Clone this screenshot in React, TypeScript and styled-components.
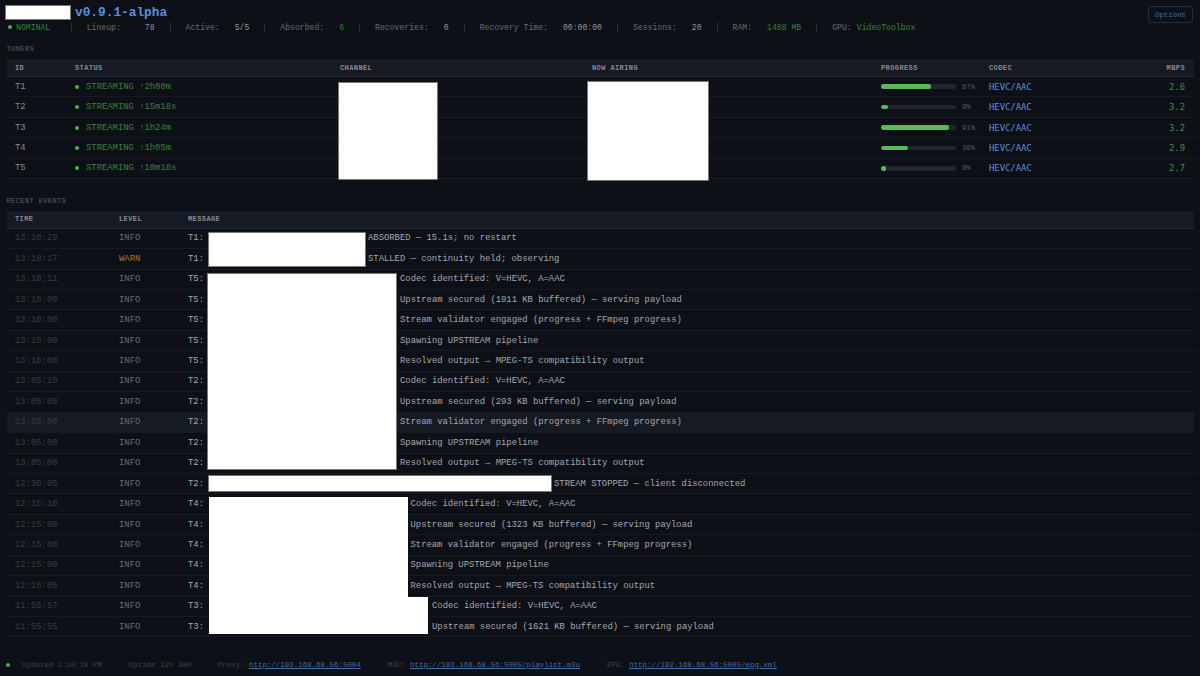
import React from "react";
import styled, { createGlobalStyle } from "styled-components";

const GlobalStyle = createGlobalStyle`
  html, body {
    margin: 0;
    padding: 0;
    background: #0d1117;
    color: #a3a8ae;
    font-family: "Liberation Mono", monospace;
    font-size: 8.87px;
  }
`;

const Page = styled.div`
  width: 1200px;
  height: 676px;
  overflow: hidden;
  display: flex;
  flex-direction: column;
  position: relative;
`;

const Header = styled.header`
  display: flex;
  justify-content: space-between;
  align-items: flex-start;
  padding: 5px 7px 0 5px;
  height: 38px;
`;

const HeaderLeft = styled.div`
  display: flex;
  flex-direction: column;
`;

const TitleRow = styled.div`
  display: flex;
  align-items: center;
  gap: 4px;
  height: 15px;
`;

const Redaction = styled.div`
  background: #fff;
  border: 1px solid #777;
  box-sizing: border-box;
`;

const TitleBlock = styled(Redaction)`
  width: 66px;
  height: 15px;
`;

const Version = styled.span`
  font-size: 12.8px;
  font-weight: bold;
  color: #5a8fdc;
`;

const StatsRow = styled.div`
  display: flex;
  align-items: center;
  height: 14px;
  padding-left: 3px;
`;

const Dot = styled.span`
  display: inline-block;
  width: 4px;
  height: 4px;
  border-radius: 50%;
  background: #4caf50;
  flex: none;
`;

const Nominal = styled.span`
  display: flex;
  align-items: center;
  gap: 4px;
  color: #38803e;
  font-size: 8.13px;
`;

const Sep = styled.span<{ $left?: number }>`
  width: 1px;
  height: 9px;
  background: #2a2f37;
  margin: 0 15px 0 ${(p) => p.$left ?? 15}px;
  flex: none;
`;

const StatLabel = styled.span`
  color: #666c73;
  font-size: 8.13px;
`;

const StatValue = styled.span<{ $gap?: number; $good?: boolean }>`
  margin-left: ${(p) => p.$gap ?? 15}px;
  color: ${(p) => (p.$good ? "#38803e" : "#8f959c")};
  font-size: 8.13px;
`;

const OptionsButton = styled.button`
  width: 45px;
  height: 17px;
  margin-top: 1px;
  padding: 0;
  background: transparent;
  border: 1px solid #21303f;
  border-radius: 3px;
  color: #3f6ea8;
  font-family: inherit;
  font-size: 7.4px;
`;

const Section = styled.section`
  position: relative;
  padding: 0 6.5px;
`;

const SectionLabel = styled.div`
  height: 16px;
  line-height: 12px;
  color: #5a6068;
  font-size: 7px;
  letter-spacing: 0.4px;
`;

const tunerColumns = "60px 265px 252px 289px 108px 1fr 60px";
const eventColumns = "104px 69px 1fr";

const Grid = styled.div<{ $cols: string }>`
  display: grid;
  grid-template-columns: ${(p) => p.$cols};
`;

const HeadRow = styled(Grid)`
  height: 18px;
  align-items: center;
  background: #161a23;
  border-bottom: 1px solid #262b33;
  box-sizing: border-box;
  color: #868c95;
  font-size: 7px;
  font-weight: bold;
  letter-spacing: 0.4px;
`;

const Row = styled(Grid)<{ $hover?: boolean }>`
  height: 20.45px;
  align-items: center;
  box-sizing: border-box;
  border-bottom: 1px solid #171b21;
  background: ${(p) => (p.$hover ? "#161a22" : "transparent")};
`;

const Cell = styled.div<{ $right?: boolean }>`
  padding: 0 8.5px;
  white-space: nowrap;
  text-align: ${(p) => (p.$right ? "right" : "left")};
`;

const TunerId = styled(Cell)`
  color: #858b92;
`;

const Streaming = styled(Cell)`
  display: flex;
  align-items: center;
  gap: 7px;
  color: #38803e;
`;

const ProgressCell = styled(Cell)`
  display: flex;
  align-items: center;
  gap: 6px;
`;

const Track = styled.div`
  flex: none;
  width: 75px;
  height: 4.5px;
  border-radius: 2px;
  background: #21252c;
  overflow: hidden;
`;

const Fill = styled.div`
  height: 100%;
  border-radius: 2px;
  background: #5cb85c;
`;

const Percent = styled.span`
  color: #565c64;
  font-size: 7.2px;
`;

const Codec = styled(Cell)`
  font-family: "DejaVu Sans Mono", monospace;
  color: #5a90dc;
`;

const Mbps = styled(Cell)`
  font-family: "DejaVu Sans Mono", monospace;
  color: #3f8f45;
`;

const TimeCell = styled(Cell)`
  color: #363c44;
`;

const LevelCell = styled(Cell)<{ $warn?: boolean }>`
  color: ${(p) => (p.$warn ? "#a67c1f" : "#666c73")};
`;

const MessageCell = styled(Cell)`
  color: #a3a8ae;
  display: flex;
  align-items: center;
`;

const Prefix = styled.span`
  width: 20px;
  flex: none;
`;

const NameGap = styled.span<{ $w: number }>`
  width: ${(p) => p.$w}px;
  flex: none;
`;

const Cover = styled(Redaction)<{ $x: number; $y: number; $w: number; $h: number; $plain?: boolean }>`
  position: absolute;
  left: ${(p) => p.$x}px;
  top: ${(p) => p.$y}px;
  width: ${(p) => p.$w}px;
  height: ${(p) => p.$h}px;
  border-color: ${(p) => (p.$plain ? "#fff" : "#777")};
`;

const EventsSection = styled(Section)`
  margin-top: 15.5px;
`;

const Footer = styled.footer`
  position: absolute;
  left: 0;
  right: 0;
  bottom: 5.5px;
  display: flex;
  align-items: center;
  padding-left: 6px;
  height: 12px;
  font-size: 7.4px;
  color: #3c4249;
`;

const FooterItem = styled.span<{ $gap: number }>`
  margin-left: ${(p) => p.$gap}px;
`;

const FooterLink = styled.a`
  color: #3f6ea8;
  font-size: 7.46px;
  text-decoration: underline;
`;

const tuners = [
  { id: "T1", up: "2h00m", pct: 67, mbps: "2.6" },
  { id: "T2", up: "15m18s", pct: 9, mbps: "3.2" },
  { id: "T3", up: "1h24m", pct: 91, mbps: "3.2" },
  { id: "T4", up: "1h05m", pct: 36, mbps: "2.9" },
  { id: "T5", up: "10m18s", pct: 6, mbps: "2.7" },
];

type EventRow = { time: string; level: string; tuner: string; gap: number; msg: string; hover?: boolean };

const events: EventRow[] = [
  { time: "13:10:29", level: "INFO", tuner: "T1", gap: 160, msg: "ABSORBED — 15.1s; no restart" },
  { time: "13:10:17", level: "WARN", tuner: "T1", gap: 160, msg: "STALLED — continuity held; observing" },
  { time: "13:10:11", level: "INFO", tuner: "T5", gap: 192, msg: "Codec identified: V=HEVC, A=AAC" },
  { time: "13:10:09", level: "INFO", tuner: "T5", gap: 192, msg: "Upstream secured (1911 KB buffered) — serving payload" },
  { time: "13:10:00", level: "INFO", tuner: "T5", gap: 192, msg: "Stream validator engaged (progress + FFmpeg progress)" },
  { time: "13:10:00", level: "INFO", tuner: "T5", gap: 192, msg: "Spawning UPSTREAM pipeline" },
  { time: "13:10:00", level: "INFO", tuner: "T5", gap: 192, msg: "Resolved output → MPEG-TS compatibility output" },
  { time: "13:05:10", level: "INFO", tuner: "T2", gap: 192, msg: "Codec identified: V=HEVC, A=AAC" },
  { time: "13:05:08", level: "INFO", tuner: "T2", gap: 192, msg: "Upstream secured (293 KB buffered) — serving payload" },
  { time: "13:05:00", level: "INFO", tuner: "T2", gap: 192, msg: "Stream validator engaged (progress + FFmpeg progress)", hover: true },
  { time: "13:05:00", level: "INFO", tuner: "T2", gap: 192, msg: "Spawning UPSTREAM pipeline" },
  { time: "13:05:00", level: "INFO", tuner: "T2", gap: 192, msg: "Resolved output → MPEG-TS compatibility output" },
  { time: "12:30:05", level: "INFO", tuner: "T2", gap: 346, msg: "STREAM STOPPED — client disconnected" },
  { time: "12:15:10", level: "INFO", tuner: "T4", gap: 202.5, msg: "Codec identified: V=HEVC, A=AAC" },
  { time: "12:15:08", level: "INFO", tuner: "T4", gap: 202.5, msg: "Upstream secured (1323 KB buffered) — serving payload" },
  { time: "12:15:00", level: "INFO", tuner: "T4", gap: 202.5, msg: "Stream validator engaged (progress + FFmpeg progress)" },
  { time: "12:15:00", level: "INFO", tuner: "T4", gap: 202.5, msg: "Spawning UPSTREAM pipeline" },
  { time: "12:15:05", level: "INFO", tuner: "T4", gap: 202.5, msg: "Resolved output → MPEG-TS compatibility output" },
  { time: "11:55:57", level: "INFO", tuner: "T3", gap: 224, msg: "Codec identified: V=HEVC, A=AAC" },
  { time: "11:55:55", level: "INFO", tuner: "T3", gap: 224, msg: "Upstream secured (1621 KB buffered) — serving payload" },
];

const covers = [
  { x: 338, y: 82, w: 100, h: 98 },
  { x: 587, y: 81, w: 122, h: 100 },
  { x: 208, y: 232, w: 158, h: 35 },
  { x: 207, y: 273, w: 190, h: 197 },
  { x: 208, y: 475, w: 344, h: 17 },
  { x: 209, y: 497, w: 199, h: 101, plain: true },
  { x: 209, y: 597, w: 219, h: 37, plain: true },
];

export default function App() {
  return (
    <Page>
      <GlobalStyle />
      <Header>
        <HeaderLeft>
          <TitleRow>
            <TitleBlock />
            <Version>v0.9.1-alpha</Version>
          </TitleRow>
          <StatsRow>
            <Nominal>
              <Dot />
              NOMINAL
            </Nominal>
            <Sep $left={20.5} />
            <StatLabel>Lineup:</StatLabel>
            <StatValue $gap={24}>78</StatValue>
            <Sep />
            <StatLabel>Active:</StatLabel>
            <StatValue>5/5</StatValue>
            <Sep />
            <StatLabel>Absorbed:</StatLabel>
            <StatValue $good>6</StatValue>
            <Sep />
            <StatLabel>Recoveries:</StatLabel>
            <StatValue>0</StatValue>
            <Sep />
            <StatLabel>Recovery Time:</StatLabel>
            <StatValue>00:00:00</StatValue>
            <Sep />
            <StatLabel>Sessions:</StatLabel>
            <StatValue>20</StatValue>
            <Sep />
            <StatLabel>RAM:</StatLabel>
            <StatValue $good>1488 MB</StatValue>
            <Sep />
            <StatLabel>GPU:</StatLabel>
            <StatValue $good $gap={5}>VideoToolbox</StatValue>
          </StatsRow>
        </HeaderLeft>
        <OptionsButton>Options</OptionsButton>
      </Header>

      <Section>
        <SectionLabel>TUNERS</SectionLabel>
        <HeadRow $cols={tunerColumns}>
          <Cell>ID</Cell>
          <Cell>STATUS</Cell>
          <Cell>CHANNEL</Cell>
          <Cell>NOW AIRING</Cell>
          <Cell>PROGRESS</Cell>
          <Cell>CODEC</Cell>
          <Cell $right>MBPS</Cell>
        </HeadRow>
        {tuners.map((t) => (
          <Row key={t.id} $cols={tunerColumns}>
            <TunerId>{t.id}</TunerId>
            <Streaming>
              <Dot />
              STREAMING ↑{t.up}
            </Streaming>
            <Cell />
            <Cell />
            <ProgressCell>
              <Track>
                <Fill style={{ width: `${t.pct}%` }} />
              </Track>
              <Percent>{t.pct}%</Percent>
            </ProgressCell>
            <Codec>HEVC/AAC</Codec>
            <Mbps $right>{t.mbps}</Mbps>
          </Row>
        ))}
      </Section>

      <EventsSection>
        <SectionLabel>RECENT EVENTS</SectionLabel>
        <HeadRow $cols={eventColumns}>
          <Cell>TIME</Cell>
          <Cell>LEVEL</Cell>
          <Cell>MESSAGE</Cell>
        </HeadRow>
        {events.map((e, i) => (
          <Row key={i} $cols={eventColumns} $hover={e.hover}>
            <TimeCell>{e.time}</TimeCell>
            <LevelCell $warn={e.level === "WARN"}>{e.level}</LevelCell>
            <MessageCell>
              <Prefix>{e.tuner}:</Prefix>
              <NameGap $w={e.gap} />
              {e.msg}
            </MessageCell>
          </Row>
        ))}
      </EventsSection>

      {covers.map((c, i) => (
        <Cover key={i} $x={c.x} $y={c.y} $w={c.w} $h={c.h} $plain={c.plain} />
      ))}

      <Footer>
        <Dot />
        <FooterItem $gap={12}>Updated 1:20:18 PM</FooterItem>
        <FooterItem $gap={27}>Uptime 12h 30m</FooterItem>
        <FooterItem $gap={27}>
          Proxy: <FooterLink href="#">http://192.168.68.56:5004</FooterLink>
        </FooterItem>
        <FooterItem $gap={27}>
          M3U: <FooterLink href="#">http://192.168.68.56:5005/playlist.m3u</FooterLink>
        </FooterItem>
        <FooterItem $gap={27}>
          EPG: <FooterLink href="#">http://192.168.68.56:5005/epg.xml</FooterLink>
        </FooterItem>
      </Footer>
    </Page>
  );
}
